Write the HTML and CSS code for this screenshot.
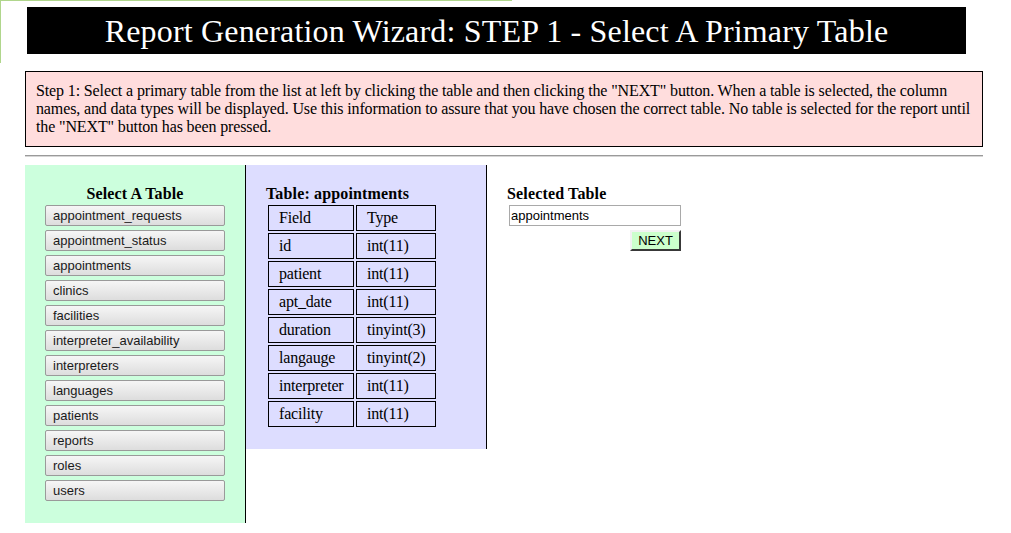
FILE: index.html
```html
<!DOCTYPE html>
<html>
<head>
<meta charset="utf-8">
<title>Report Generation Wizard</title>
<link rel="stylesheet" href="styles.css">
</head>
<body>
<div class="banner">
  <h1 class="title">Report Generation Wizard: STEP 1 - Select A Primary Table</h1>
</div>
<div class="instructions">Step 1: Select a primary table from the list at left by clicking the table and then clicking the "NEXT" button. When a table is selected, the column names, and data types will be displayed. Use this information to assure that you have chosen the correct table. No table is selected for the report until the "NEXT" button has been pressed.</div>
<hr class="divider">
<div class="columns">
  <div class="panel panel-list">
    <h2 class="panel-heading center">Select A Table</h2>
    <div class="table-list">
      <button class="table-btn">appointment_requests</button>
      <button class="table-btn">appointment_status</button>
      <button class="table-btn">appointments</button>
      <button class="table-btn">clinics</button>
      <button class="table-btn">facilities</button>
      <button class="table-btn">interpreter_availability</button>
      <button class="table-btn">interpreters</button>
      <button class="table-btn">languages</button>
      <button class="table-btn">patients</button>
      <button class="table-btn">reports</button>
      <button class="table-btn">roles</button>
      <button class="table-btn">users</button>
    </div>
  </div>
  <div class="panel panel-schema">
    <h2 class="panel-heading">Table: appointments</h2>
    <table class="schema">
      <colgroup><col class="col-field"><col class="col-type"></colgroup>
      <tr><td>Field</td><td>Type</td></tr>
      <tr><td>id</td><td>int(11)</td></tr>
      <tr><td>patient</td><td>int(11)</td></tr>
      <tr><td>apt_date</td><td>int(11)</td></tr>
      <tr><td>duration</td><td>tinyint(3)</td></tr>
      <tr><td>langauge</td><td>tinyint(2)</td></tr>
      <tr><td>interpreter</td><td>int(11)</td></tr>
      <tr><td>facility</td><td>int(11)</td></tr>
    </table>
  </div>
  <div class="panel panel-selected">
    <h2 class="panel-heading">Selected Table</h2>
    <div class="selected-form">
      <input class="selected-input" type="text" value="appointments">
      <button class="next-btn">NEXT</button>
    </div>
  </div>
</div>
</body>
</html>
```

FILE: styles.css
```css
html, body {
  margin: 0;
  padding: 0;
  background: #ffffff;
}

body {
  font-family: "Liberation Serif", "Times New Roman", serif;
  font-size: 16px;
  color: #000;
}

.banner {
  position: relative;
  padding: 7px 0 0 27px;
}

.banner::before {
  content: "";
  position: absolute;
  left: 0;
  top: 0;
  width: 512px;
  height: 63px;
  border-top: 1px solid #b0d68c;
  border-left: 1px solid #b0d68c;
  box-sizing: border-box;
}

.title {
  position: relative;
  margin: 0;
  width: 939px;
  height: 47px;
  box-sizing: border-box;
  padding: 6px 0 4px;
  background: #000;
  color: #fff;
  font-weight: normal;
  font-size: 32px;
  letter-spacing: 0.18px;
  line-height: 37px;
  text-align: center;
}

.instructions {
  margin: 17px 0 0 25px;
  width: 958px;
  box-sizing: border-box;
  border: 1px solid #000;
  background: #ffdddd;
  padding: 10px;
  line-height: 18px;
  letter-spacing: -0.13px;
}

.divider {
  margin: 8px 0 8px 25px;
  width: 958px;
  height: 0;
  border: 0;
  border-top: 1px solid #9a9a9a;
  border-bottom: 1px solid #d6d6d6;
}

.columns {
  display: flex;
  align-items: flex-start;
  margin-left: 25px;
}

.panel {
  padding: 19px 20px 0;
  box-sizing: border-box;
}

.panel-heading {
  margin: 0;
  font-size: 16px;
  font-weight: bold;
  line-height: 19px;
  letter-spacing: 0.15px;
}

.center {
  text-align: center;
}

.panel-list {
  width: 221px;
  background: #ccffdd;
  border-right: 1px solid #000;
  padding-bottom: 22px;
}

.panel-list .panel-heading {
  margin-bottom: 2px;
}

.table-list {
  display: flex;
  flex-direction: column;
  gap: 4px;
}

.table-btn {
  display: block;
  width: 180px;
  height: 21px;
  box-sizing: border-box;
  margin: 0;
  padding: 0 0 0 7px;
  text-align: left;
  font-family: "Liberation Sans", Arial, sans-serif;
  font-size: 13px;
  color: #1a1a1a;
  background: linear-gradient(#f6f6f6, #dddddd);
  border: 1px solid #9a9a9a;
  border-radius: 2px;
}

.panel-schema {
  width: 241px;
  background: #ddddff;
  border-right: 1px solid #000;
  padding-bottom: 20px;
}

.schema {
  border-collapse: separate;
  border-spacing: 2px;
  table-layout: fixed;
  width: 172px;
}

.col-field {
  width: 86px;
}

.col-type {
  width: 80px;
}

.schema td {
  border: 1px solid #000;
  padding: 3px 0 3px 10px;
  line-height: 18px;
  font-size: 16px;
  letter-spacing: -0.2px;
  white-space: nowrap;
  overflow: visible;
}

.panel-selected {
  padding-left: 20px;
}

.selected-form {
  display: flex;
  flex-direction: column;
  align-items: flex-end;
  width: 172px;
  margin: 2px 0 0 2px;
}

.selected-input {
  display: block;
  width: 172px;
  height: 21px;
  box-sizing: border-box;
  margin: 0;
  padding: 0 1px;
  border: 1px solid #a9a9a9;
  font-family: "Liberation Sans", Arial, sans-serif;
  font-size: 13px;
  color: #000;
  background: #fff;
}

.next-btn {
  display: block;
  width: 51px;
  height: 21px;
  box-sizing: border-box;
  margin: 4px 0 0 0;
  padding: 0;
  background: #ccffcc;
  border-width: 2px;
  border-style: outset;
  border-color: #f2f2f2 #8c8c8c #8c8c8c #f2f2f2;
  font-family: "Liberation Sans", Arial, sans-serif;
  font-size: 13px;
  color: #000;
}
```
